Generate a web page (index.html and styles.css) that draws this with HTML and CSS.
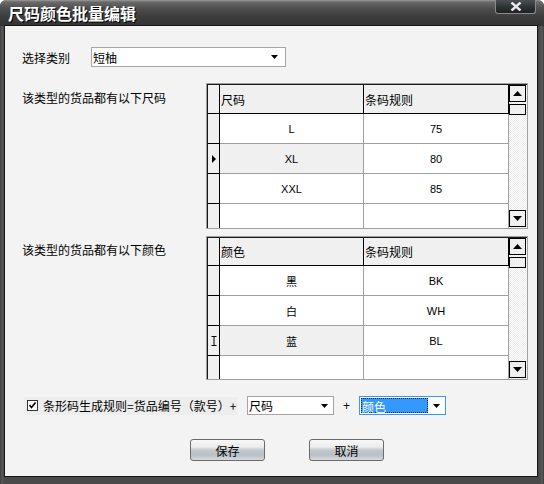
FILE: index.html
```html
<!DOCTYPE html>
<html>
<head>
<meta charset="utf-8">
<link rel="stylesheet" href="styles.css">
</head>
<body>
<div class="window">
  <div class="titlebar">
    <span class="title">尺码颜色批量编辑</span>
    <div class="close-btn">
      <svg width="12" height="9" viewBox="0 0 12 9"><path d="M1.5 0.5 L10.5 8.5 M10.5 0.5 L1.5 8.5" stroke="#e8e8e8" stroke-width="2.4" fill="none"/></svg>
    </div>
  </div>
  <div class="client">
    <div class="row-category">
      <span class="lbl">选择类别</span>
      <div class="combo combo-wide">
        <span class="combo-text">短柚</span>
        <svg class="arrow" width="7" height="4" viewBox="0 0 7 4"><path d="M0 0 H7 L3.5 4 Z" fill="#000"/></svg>
      </div>
    </div>

    <div class="section">
      <div class="section-label">该类型的货品都有以下尺码</div>
      <div class="datagrid grid-size">
        <div class="grid-inner">
          <div class="grid-body rows-a">
            <div class="c rh"></div><div class="c hd">尺码</div><div class="c hd">条码规则</div>
            <div class="c rh"></div><div class="c td">L</div><div class="c td">75</div>
            <div class="c rh"><svg width="4" height="8" viewBox="0 0 4 8"><path d="M0 0 L4 4 L0 8 Z" fill="#000"/></svg></div><div class="c td cur">XL</div><div class="c td">80</div>
            <div class="c rh"></div><div class="c td">XXL</div><div class="c td">85</div>
            <div class="c rh last"></div><div class="c td last"></div><div class="c td last"></div>
          </div>
          <div class="vscroll">
            <div class="sb-btn"><svg width="9" height="5" viewBox="0 0 9 5"><path d="M0 5 H9 L4.5 0 Z" fill="#000"/></svg></div>
            <div class="sb-thumb"></div>
            <div class="sb-track"></div>
            <div class="sb-btn sb-down"><svg width="9" height="5" viewBox="0 0 9 5"><path d="M0 0 H9 L4.5 5 Z" fill="#000"/></svg></div>
          </div>
        </div>
      </div>
    </div>

    <div class="section section-second">
      <div class="section-label">该类型的货品都有以下颜色</div>
      <div class="datagrid grid-color">
        <div class="grid-inner">
          <div class="grid-body rows-b">
            <div class="c rh"></div><div class="c hd">颜色</div><div class="c hd">条码规则</div>
            <div class="c rh"></div><div class="c td">黑</div><div class="c td">BK</div>
            <div class="c rh"></div><div class="c td">白</div><div class="c td">WH</div>
            <div class="c rh"><svg width="6" height="10" viewBox="0 0 6 10"><path d="M0.5 0.5 H5.5 M3 0.5 V9.5 M0.5 9.5 H5.5" stroke="#000" stroke-width="1" fill="none"/></svg></div><div class="c td cur">蓝</div><div class="c td">BL</div>
            <div class="c rh last"></div><div class="c td last"></div><div class="c td last"></div>
          </div>
          <div class="vscroll">
            <div class="sb-btn"><svg width="9" height="5" viewBox="0 0 9 5"><path d="M0 5 H9 L4.5 0 Z" fill="#000"/></svg></div>
            <div class="sb-thumb"></div>
            <div class="sb-track"></div>
            <div class="sb-btn sb-down"><svg width="9" height="5" viewBox="0 0 9 5"><path d="M0 0 H9 L4.5 5 Z" fill="#000"/></svg></div>
          </div>
        </div>
      </div>
    </div>

    <div class="gen-row">
      <label class="gen-check">
        <svg class="checkbox" width="11" height="11" viewBox="0 0 11 11"><rect x="0.5" y="0.5" width="10" height="10" fill="#fff" stroke="#333"/><path d="M2.5 5 L4.5 7.5 L8.5 2.5" stroke="#000" stroke-width="1.6" fill="none"/></svg>
        <span>条形码生成规则=货品编号（款号）+</span>
      </label>
      <div class="combo combo-small">
        <span class="combo-text">尺码</span>
        <svg class="arrow" width="7" height="4" viewBox="0 0 7 4"><path d="M0 0 H7 L3.5 4 Z" fill="#000"/></svg>
      </div>
      <span class="plus">+</span>
      <div class="combo combo-small combo-focus">
        <span class="combo-sel">颜色</span>
        <svg class="arrow" width="7" height="4" viewBox="0 0 7 4"><path d="M0 0 H7 L3.5 4 Z" fill="#000"/></svg>
      </div>
    </div>

    <div class="buttons">
      <div class="btn">保存</div>
      <div class="btn">取消</div>
    </div>
  </div>
</div>
</body>
</html>
```

FILE: styles.css
```css
html, body {
  margin: 0;
  padding: 0;
  background: #ffffff;
}
body {
  font-family: "Noto Sans CJK SC", "Liberation Sans", sans-serif;
  font-size: 12px;
  color: #000;
}
.window {
  width: 544px;
  height: 484px;
  background: linear-gradient(90deg, #3c3c3c 0, #5a5a5a 2px, #4a4a4a 4px, #4a4a4a 540px, #5a5a5a 542px, #3c3c3c 544px);
  display: flex;
  flex-direction: column;
  border-radius: 6px 6px 0 0;
  overflow: hidden;
}
.titlebar {
  height: 26px;
  flex: none;
  display: flex;
  justify-content: space-between;
  align-items: flex-start;
  background: linear-gradient(#9a9a9a 0, #6a6a6a 2px, #505050 8px, #3e3e3e 16px, #333333 26px);
  border-radius: 6px 6px 0 0;
}
.title {
  color: #fff;
  font-weight: bold;
  font-size: 16px;
  line-height: 26px;
  margin-left: 8px;
  text-shadow: 1px 1px 0 #000;
}
.close-btn {
  width: 41px;
  height: 14px;
  margin-right: 8px;
  box-sizing: border-box;
  background: linear-gradient(#4a4f52, #2a2f32 60%, #1e2224);
  border: 1px solid #8a8a8a;
  border-top: none;
  border-radius: 0 0 3px 3px;
  display: flex;
  align-items: center;
  justify-content: center;
}
.client {
  flex: 1;
  margin: 0 7px 8px 5px;
  background: #f3f3f3;
  padding: 21px 0 0 17px;
  box-sizing: border-box;
  box-shadow: 0 0 0 1px #151515;
}
.row-category {
  display: flex;
  align-items: center;
  height: 20px;
}
.lbl {
  width: 69px;
}
.combo {
  box-sizing: border-box;
  background: #fff;
  border: 1px solid #a5a5a5;
  display: flex;
  align-items: center;
  justify-content: space-between;
  padding: 0 7px 0 1px;
}
.combo-wide {
  width: 195px;
  height: 20px;
}
.combo-small {
  width: 87px;
  height: 19px;
  padding-right: 5px;
}
.combo-focus {
  border-color: #3399ff;
  padding-left: 1px;
}
.combo-sel {
  width: 67px;
  height: 15px;
  line-height: 15px;
  box-sizing: border-box;
  background: #3399ff;
  color: #fff;
  border: 1px dotted #222;
}
.section {
  display: flex;
  margin-top: 16px;
}
.section-second {
  margin-top: 7px;
}
.section-label {
  width: 184px;
  padding-top: 7px;
  line-height: 16px;
}
.section-second .section-label {
  padding-top: 6px;
}
.datagrid {
  width: 322px;
  box-sizing: border-box;
  border: 1px solid #a0a0a0;
  display: flex;
}
.grid-size { height: 146px; }
.grid-color { height: 144px; }
.grid-inner {
  flex: 1;
  display: flex;
  border-top: 1px solid #1a1a1a;
  border-left: 1px solid #1a1a1a;
}
.grid-body {
  display: grid;
  grid-template-columns: 12px 144px 145px;
  background: #fff;
}
.rows-a { grid-template-rows: 29px 30px 30px 30px 1fr; }
.rows-b { grid-template-rows: 28px 30px 30px 30px 1fr; }
.c {
  box-sizing: border-box;
  display: flex;
  align-items: center;
  justify-content: center;
}
.rh {
  background: #f0f0f0;
  border-right: 1px solid #000;
  border-bottom: 1px solid #000;
}
.hd {
  background: #f0f0f0;
  border-right: 1px solid #000;
  border-bottom: 1px solid #000;
  justify-content: flex-start;
  padding-left: 1px;
}
.td {
  background: #fff;
  border-right: 1px solid #a0a0a0;
  border-bottom: 1px solid #a0a0a0;
  font-family: "Liberation Sans", "Noto Sans CJK SC", sans-serif;
  font-size: 11px;
}
.td.cur {
  background: #f0f0f0;
}
.last {
  border-bottom: none;
}
.vscroll {
  width: 18px;
  display: flex;
  flex-direction: column;
  background: repeating-conic-gradient(#ffffff 0 25%, #ebebeb 0 50%) 0 0 / 2px 2px;
}
.sb-btn {
  width: 17px;
  height: 17px;
  box-sizing: border-box;
  border: 1px solid #000;
  background: #f0f0f0;
  display: flex;
  align-items: center;
  justify-content: center;
}
.sb-thumb {
  width: 17px;
  height: 11px;
  margin-top: 2px;
  box-sizing: border-box;
  border: 1px solid #000;
  background: #f0f0f0;
}
.sb-track {
  flex: 1;
}
.sb-down {
  margin-bottom: 1px;
}
.gen-row {
  display: flex;
  align-items: center;
  margin-top: 16px;
  height: 19px;
}
.gen-check {
  margin-left: 2px;
  width: 213px;
  height: 18px;
  background: #ededed;
  display: flex;
  align-items: center;
  padding-left: 3px;
  box-sizing: border-box;
}
.checkbox {
  margin-right: 5px;
  flex: none;
}
.gen-check + .combo {
  margin-left: 10px;
}
.plus {
  width: 25px;
  text-align: center;
  font-family: "Liberation Sans", sans-serif;
}
.buttons {
  display: flex;
  margin-top: 24px;
  margin-left: 168px;
  gap: 44px;
}
.btn {
  width: 75px;
  height: 22px;
  box-sizing: border-box;
  border: 1px solid #6a6a6a;
  border-radius: 3px;
  background: linear-gradient(#f7f7f7 0, #ececec 35%, #c3c9ce 50%, #b9c0c6 75%, #d6dadd 100%);
  display: flex;
  align-items: center;
  justify-content: center;
}
```
